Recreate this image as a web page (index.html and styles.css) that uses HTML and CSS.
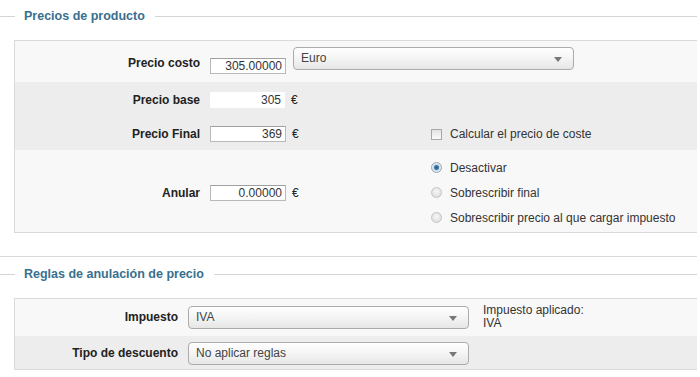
FILE: index.html
```html
<!DOCTYPE html>
<html>
<head>
    <title>Precios de producto</title>
    <link rel="stylesheet" href="styles.css">
</head>
<body>
    <div class="section">
        <div class="legend"><span>Precios de producto</span></div>
        <div class="panel">
            <div class="row row-first">
                <div class="line">
                    <label class="label">Precio costo</label>
                    <div class="field-group field-group-cost">
                        <input class="num num-cost" type="text" value="305.00000">
                        <div class="select select-currency">
                            <span>Euro</span>
                            <svg class="arrow" width="8" height="5" viewBox="0 0 8 5"><path d="M0 0h8L4 5z" fill="#777"/></svg>
                        </div>
                    </div>
                </div>
            </div>

            <div class="row row-alt">
                <div class="line">
                    <label class="label">Precio base</label>
                    <div class="field-group">
                        <input class="num num-plain" type="text" value="305" readonly>
                        <span class="unit">€</span>
                    </div>
                </div>
                <div class="line line-final">
                    <label class="label">Precio Final</label>
                    <div class="field-group">
                        <input class="num" type="text" value="369">
                        <span class="unit">€</span>
                    </div>
                    <div class="extra">
                        <div class="option">
                            <span class="check"></span>
                            <span>Calcular el precio de coste</span>
                        </div>
                    </div>
                </div>
            </div>

            <div class="row row-last">
                <div class="line">
                    <label class="label">Anular</label>
                    <div class="field-group">
                        <input class="num" type="text" value="0.00000">
                        <span class="unit">€</span>
                    </div>
                    <div class="extra">
                        <div class="option option-radio">
                            <span class="radio checked"></span>
                            <span>Desactivar</span>
                        </div>
                        <div class="option option-radio">
                            <span class="radio"></span>
                            <span>Sobrescribir final</span>
                        </div>
                        <div class="option option-radio">
                            <span class="radio"></span>
                            <span>Sobrescribir precio al que cargar impuesto</span>
                        </div>
                    </div>
                </div>
            </div>
        </div>
    </div>

    <div class="section section-rules">
        <div class="legend"><span>Reglas de anulación de precio</span></div>
        <div class="panel panel-rules">
            <div class="row rule-row">
                <div class="line">
                    <label class="label">Impuesto</label>
                    <div class="select select-wide">
                        <span>IVA</span>
                        <svg class="arrow" width="8" height="5" viewBox="0 0 8 5"><path d="M0 0h8L4 5z" fill="#777"/></svg>
                    </div>
                    <div class="tax-info">
                        <div>Impuesto aplicado:</div>
                        <div>IVA</div>
                    </div>
                </div>
            </div>
            <div class="row rule-row row-alt">
                <div class="line">
                    <label class="label">Tipo de descuento</label>
                    <div class="select select-wide">
                        <span>No aplicar reglas</span>
                        <svg class="arrow" width="8" height="5" viewBox="0 0 8 5"><path d="M0 0h8L4 5z" fill="#777"/></svg>
                    </div>
                </div>
            </div>
        </div>
    </div>
</body>
</html>
```

FILE: styles.css
```css
body {
    margin: 0;
    padding: 8px 3px 0 0;
    font-family: "Liberation Sans", Arial, sans-serif;
    font-size: 12px;
    color: #333;
    background: #fff;
}
.legend {
    display: flex;
    align-items: center;
    height: 16px;
}
.legend::before {
    content: "";
    width: 15px;
    border-top: 1px solid #d4d4d4;
}
.legend::after {
    content: "";
    flex: 1;
    border-top: 1px solid #d4d4d4;
}
.legend span {
    padding: 0 10px 0 9px;
    font-size: 12.5px;
    font-weight: bold;
    color: #38708f;
}
.panel {
    margin: 16px 0 0 14px;
    border: 1px solid #dadada;
    border-right-width: 0;
    background: #f8f8f8;
}
.section-rules {
    margin-top: 23px;
    border-top: 1px solid #dadada;
    padding-top: 9px;
}
.row {
    background: #f8f8f8;
}
.row-alt {
    background: #ededed;
}
.row-first {
    height: 41px;
    padding-top: 6px;
    box-sizing: border-box;
}
.row-first .line {
    align-items: flex-start;
}
.row-first .label {
    margin-top: 8px;
}
.row-first .num {
    margin-top: 11px;
}
.row-alt:not(.rule-row) {
    height: 68px;
    padding-top: 10px;
    box-sizing: border-box;
}
.line {
    display: flex;
    align-items: center;
}
.line-final {
    margin-top: 18px;
}
.label {
    width: 185px;
    margin-right: 10px;
    text-align: right;
    font-weight: bold;
    color: #222;
    line-height: 16px;
    flex-shrink: 0;
}
.field-group {
    width: 220px;
    display: flex;
    align-items: flex-start;
    gap: 6px;
    flex-shrink: 0;
}
.field-group-cost {
    width: auto;
}
.num {
    width: 76px;
    height: 16px;
    box-sizing: border-box;
    margin: 0;
    padding: 0 3px;
    border: 1px solid #b9b9b9;
    border-top-color: #a0a0a0;
    background: #fff;
    font-family: inherit;
    font-size: 12px;
    color: #333;
    text-align: right;
}
.num-plain {
    border-color: #fff;
    width: 75px;
}
.unit {
    line-height: 16px;
    color: #222;
}
.select {
    position: relative;
    height: 23px;
    box-sizing: border-box;
    border: 1px solid #ababab;
    border-radius: 4px;
    background: linear-gradient(#ffffff, #f4f4f4 50%, #e6e6e6);
    padding-left: 7px;
    line-height: 21px;
    font-size: 12px;
    color: #444;
    flex-shrink: 0;
}
.select-currency {
    width: 281px;
    margin-left: 1px;
}
.select .arrow {
    position: absolute;
    right: 11px;
    top: 9px;
}
.extra {
    display: flex;
    flex-direction: column;
}
.option {
    display: flex;
    align-items: center;
    gap: 8px;
    line-height: 16px;
    color: #333;
}
.check {
    width: 11px;
    height: 11px;
    box-sizing: border-box;
    border: 1px solid #a8a8a8;
    background: linear-gradient(#e2e2e2, #fafafa);
    margin-left: 1px;
}
.row-last {
    height: 82px;
    padding-top: 5px;
    box-sizing: border-box;
}
.option-radio {
    height: 25px;
}
.radio {
    width: 11px;
    height: 11px;
    box-sizing: border-box;
    border-radius: 50%;
    border: 1px solid #c4c4c4;
    background: radial-gradient(circle at 50% 40%, #f6f6f6, #d8d8d8);
    margin-left: 1px;
}
.radio.checked {
    border-color: #8fa6b8;
    background: radial-gradient(circle, #2b5d86 0, #3f77a3 2px, #cfdbe5 3px, #eef2f5 5px);
}
.panel-rules .label {
    width: 163px;
}
.rule-row {
    height: 37px;
    padding-top: 7px;
    box-sizing: border-box;
}
.rule-row.row-alt {
    height: 33px;
    padding-top: 6px;
}
.rule-row .line {
    align-items: flex-start;
}
.rule-row .label {
    margin-top: 3px;
}
.select-wide {
    width: 281px;
}
.tax-info {
    margin-left: 14px;
    margin-top: -2px;
    line-height: 13px;
    color: #333;
}
```
